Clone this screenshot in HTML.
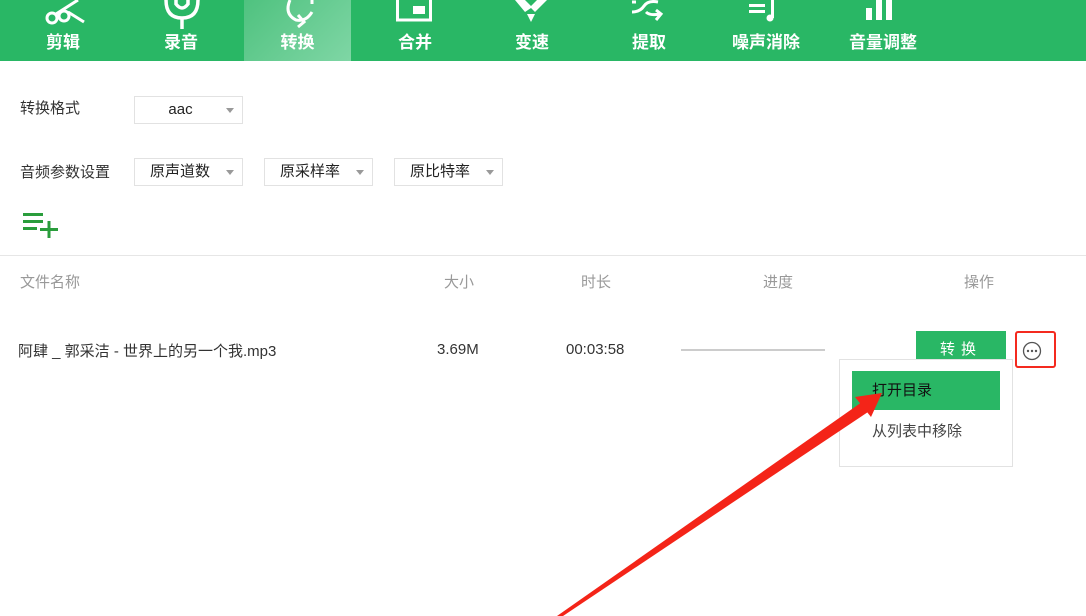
<!DOCTYPE html>
<html><head><meta charset="utf-8"><style>
*{margin:0;padding:0;box-sizing:border-box}
body{width:1086px;height:616px;overflow:hidden;background:#fff;font-family:"Liberation Sans","Noto Sans CJK SC",sans-serif;position:relative;color:#333}
.top{position:absolute;left:0;top:0;width:1086px;height:61px;background:#29b765}
.tab{position:absolute;top:0;width:118px;height:61px;text-align:center;color:#fff;font-size:17px;font-weight:bold}
.tab .lbl{position:absolute;top:32px;left:0;width:100%;line-height:22px}
.tab.act{background:linear-gradient(135deg,#4fc27f,#7fd6a5)}
.abs{position:absolute}
.sel{position:absolute;height:28px;border:1px solid #e2e2e2;background:#fff;font-size:15px;line-height:26px;color:#222}
.sel:after{content:"";position:absolute;right:8px;top:11px;border-left:4px solid transparent;border-right:4px solid transparent;border-top:5px solid #999}
.lab{position:absolute;font-size:15px;color:#333}
.hd{position:absolute;top:271px;font-size:15px;color:#999}
</style></head><body>
<div class="top">
 <div class="tab" style="left:4px"><svg class="abs" style="left:38px;top:0" width="44" height="28"><g fill="none" stroke="#fff" stroke-width="3"><circle cx="10" cy="18" r="5"/><circle cx="22" cy="16" r="5"/><path d="M14 14 L36 0 M26 12 L42 22"/></g></svg><div class="lbl">剪辑</div></div>
 <div class="tab" style="left:122px"><svg class="abs" style="left:40px;top:0" width="40" height="30"><g fill="none" stroke="#fff" stroke-width="3.5"><path d="M4 0 Q4 18 20 18 Q36 18 36 0"/><path d="M20 18 V29"/><path d="M14 0 V4 Q20 12 26 4 V0"/></g></svg><div class="lbl">录音</div></div>
 <div class="tab act" style="left:244px;width:107px"><svg class="abs" style="left:38px;top:0" width="34" height="30"><g fill="none" stroke="#fff" stroke-width="3"><path d="M8 0 Q2 14 14 20 Q24 22 30 12 M30 0 V4"/><path d="M16 15 L22 22 L16 27" /></g></svg><div class="lbl">转换</div></div>
 <div class="tab" style="left:356px"><svg class="abs" style="left:40px;top:0" width="40" height="24"><rect x="1.5" y="-4" width="33" height="24" fill="none" stroke="#fff" stroke-width="3"/><rect x="17" y="6" width="12" height="8" fill="#fff"/></svg><div class="lbl">合并</div></div>
 <div class="tab" style="left:473px"><svg class="abs" style="left:40px;top:0" width="40" height="24"><path d="M2 0 H12 L18 6 L24 0 H34 L26 8 L22 12 L18 8 L12 12 Z M14 14 H22 L18 22 Z" fill="#fff"/></svg><div class="lbl">变速</div></div>
 <div class="tab" style="left:590px"><svg class="abs" style="left:40px;top:0" width="40" height="24"><g fill="none" stroke="#fff" stroke-width="3"><path d="M2 12 Q10 12 14 6 T28 2 M2 2 H6 M16 12 Q20 16 30 14"/><path d="M26 10 L31 14 L26 20"/></g></svg><div class="lbl">提取</div></div>
 <div class="tab" style="left:707px"><svg class="abs" style="left:40px;top:0" width="40" height="24"><g fill="#fff"><rect x="2" y="4" width="16" height="3"/><rect x="2" y="10" width="16" height="3"/><rect x="24" y="0" width="3" height="18"/><circle cx="23" cy="18" r="3.5"/></g></svg><div class="lbl">噪声消除</div></div>
 <div class="tab" style="left:824px"><svg class="abs" style="left:40px;top:0" width="40" height="24"><g fill="#fff"><rect x="2" y="8" width="6" height="12"/><rect x="12" y="0" width="6" height="20"/><rect x="22" y="0" width="6" height="20"/></g></svg><div class="lbl">音量调整</div></div>
</div>

<div class="lab" style="left:20px;top:97px">转换格式</div>
<div class="sel" style="left:134px;top:96px;width:109px;text-align:center;padding-right:16px">aac</div>
<div class="lab" style="left:20px;top:161px">音频参数设置</div>
<div class="sel" style="left:134px;top:158px;width:109px;padding-left:15px">原声道数</div>
<div class="sel" style="left:264px;top:158px;width:109px;padding-left:15px">原采样率</div>
<div class="sel" style="left:394px;top:158px;width:109px;padding-left:15px">原比特率</div>
<svg class="abs" style="left:22px;top:210px" width="38" height="28"><g fill="#2a9d3c"><rect x="1" y="3" width="20" height="3"/><rect x="1" y="10" width="20" height="3"/><rect x="1" y="17" width="14" height="3"/><rect x="18" y="18" width="18" height="3"/><rect x="25.5" y="11" width="3" height="17"/></g></svg>

<div class="abs" style="left:0;top:255px;width:1086px;height:1px;background:#e6e6e6"></div>
<div class="hd" style="left:20px">文件名称</div>
<div class="hd" style="left:444px">大小</div>
<div class="hd" style="left:581px">时长</div>
<div class="hd" style="left:763px">进度</div>
<div class="hd" style="left:964px">操作</div>

<div class="abs" style="left:18px;top:340px;font-size:15px;color:#333">阿肆 _ 郭采洁 - 世界上的另一个我.mp3</div>
<div class="abs" style="left:437px;top:341px;font-size:15px">3.69M</div>
<div class="abs" style="left:566px;top:341px;font-size:15px">00:03:58</div>
<div class="abs" style="left:681px;top:349px;width:144px;height:2px;background:#ccc"></div>
<div class="abs" style="left:916px;top:331px;width:90px;height:30px;background:#29b765;color:#fff;font-size:15px;line-height:38px;text-align:center;letter-spacing:6px">转换</div>
<div class="abs" style="left:1015px;top:331px;width:41px;height:37px;border:2px solid #f42a1f;border-radius:3px"></div>
<svg class="abs" style="left:1021px;top:340px" width="22" height="22"><circle cx="11" cy="11" r="8.5" fill="none" stroke="#555" stroke-width="1.3"/><circle cx="7" cy="11" r="1.2" fill="#555"/><circle cx="11" cy="11" r="1.2" fill="#555"/><circle cx="15" cy="11" r="1.2" fill="#555"/></svg>

<div class="abs" style="left:839px;top:359px;width:174px;height:108px;border:1px solid #e2e2e2;background:#fff"></div>
<div class="abs" style="left:852px;top:371px;width:148px;height:39px;background:#29b765;color:#111;font-size:15px;line-height:39px;padding-left:20px">打开目录</div>
<div class="abs" style="left:872px;top:420px;font-size:15px;color:#444">从列表中移除</div>

<svg class="abs" style="left:0;top:0" width="1086" height="616"><path d="M557 616 L862 402 L868 412 L563 616 Z" fill="#f42418"/><path d="M882 393 L855 397 L871 417 Z" fill="#f42418"/></svg>
</body></html>
